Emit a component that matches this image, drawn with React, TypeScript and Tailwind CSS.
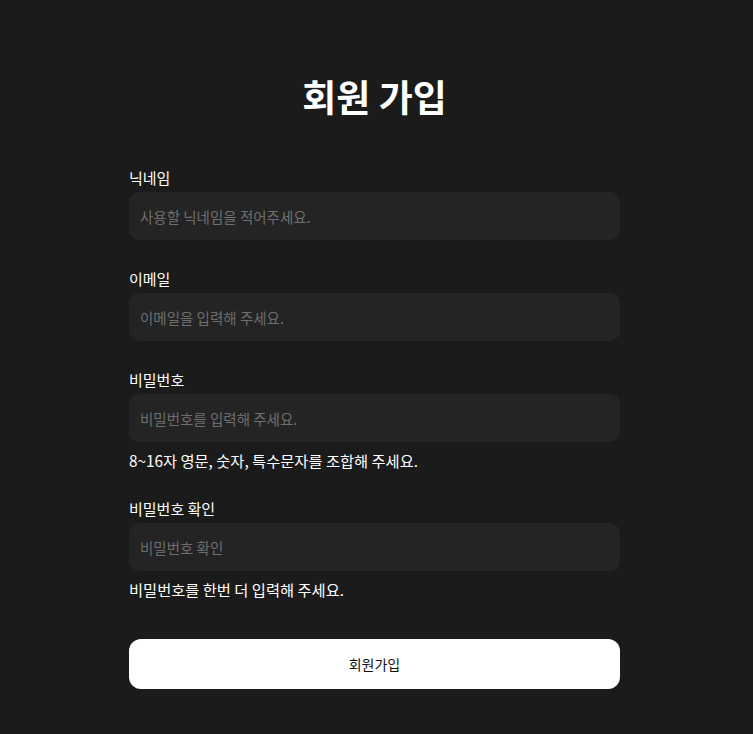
import React from "react";

const font = { fontFamily: '"Noto Sans CJK KR", "Noto Sans", sans-serif' };

function Field({ label, placeholder, type = "text", helper }: { label: string; placeholder: string; type?: string; helper?: string }) {
  return (
    <div className="flex flex-col">
      <label className="text-[15px] leading-[20px] font-normal text-white">{label}</label>
      <input
        type={type}
        placeholder={placeholder}
        className="mt-[4px] h-[48px] w-full rounded-[10px] bg-[#242424] px-[11px] text-[14.5px] text-white placeholder:text-[#6e6e6e] outline-none"
      />
      {helper && <p className="mt-[8px] text-[15.3px] leading-[20px] font-normal text-white">{helper}</p>}
    </div>
  );
}

export default function App() {
  return (
    <div className="min-h-[734px] w-full bg-[#1b1b1b]" style={font}>
      <div className="ml-[129px] flex w-[491px] flex-col pt-[76px]">
        <h1 className="text-center text-[37px] leading-[40px] font-bold text-white">회원 가입</h1>
        <div className="mt-[52px] flex flex-col gap-[29px]">
          <Field label="닉네임" placeholder="사용할 닉네임을 적어주세요." />
          <Field label="이메일" placeholder="이메일을 입력해 주세요." />
          <Field label="비밀번호" type="password" placeholder="비밀번호를 입력해 주세요." helper="8~16자 영문, 숫자, 특수문자를 조합해 주세요." />
          <Field label="비밀번호 확인" type="password" placeholder="비밀번호 확인" helper="비밀번호를 한번 더 입력해 주세요." />
        </div>
        <button className="mt-[40px] h-[50px] w-full rounded-[12px] bg-white text-[14px] text-[#111]">회원가입</button>
      </div>
    </div>
  );
}
